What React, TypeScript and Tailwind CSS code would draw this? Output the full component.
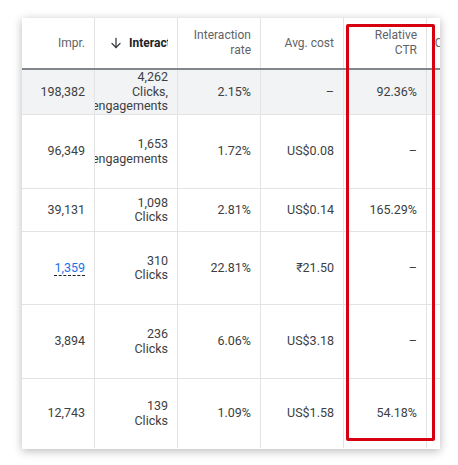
import React from "react";

const widths = ["w-[73px]", "w-[83px]", "w-[83px]", "w-[83px]", "w-[83px]", "w-[83px]"];

type Cell = React.ReactNode;

const rows: { h: string; bg?: string; cells: Cell[] }[] = [
  {
    h: "h-[45px]",
    bg: "bg-[#f1f3f4]",
    cells: ["198,382", ["4,262", "Clicks,", "engagements"], "2.15%", "–", "92.36%", ""],
  },
  {
    h: "h-[74px]",
    cells: ["96,349", ["1,653", "engagements"], "1.72%", "US$0.08", "–", ""],
  },
  {
    h: "h-[43px]",
    cells: ["39,131", ["1,098", "Clicks"], "2.81%", "US$0.14", "165.29%", ""],
  },
  {
    h: "h-[73px]",
    cells: [
      <span className="text-[#1a73e8] border-b border-dashed border-[#202124] leading-[14px]">1,359</span>,
      ["310", "Clicks"],
      "22.81%",
      "₹21.50",
      "–",
      "",
    ],
  },
  {
    h: "h-[74px]",
    cells: ["3,894", ["236", "Clicks"], "6.06%", "US$3.18", "–", ""],
  },
  {
    h: "h-[69px]",
    cells: ["12,743", ["139", "Clicks"], "1.09%", "US$1.58", "54.18%", ""],
  },
];

function ArrowDownIcon() {
  return (
    <svg width="12" height="12" viewBox="0 0 12 12" fill="none" stroke="#3c4043" strokeWidth="1.3" strokeLinecap="round" strokeLinejoin="round" className="shrink-0">
      <path d="M6 1.5v9" />
      <path d="M2 6.5l4 4 4-4" />
    </svg>
  );
}

export default function App() {
  return (
    <div
      className="relative w-[458px] h-[465px] bg-white pt-[18px] pl-[22px]"
      style={{ fontFamily: "Roboto, 'Liberation Sans', sans-serif" }}
    >
      <div className="w-[418px] h-[431px] overflow-hidden bg-white shadow-[0_2px_9px_rgba(0,0,0,0.28)] text-[12px] text-[#3c4043]">
        <div className="flex h-[52px] border-b-2 border-[#80868b] text-[#5f6368]">
          <div className="w-[73px] shrink-0 h-full border-r border-[#e3e3e3] pr-[9px] flex items-center justify-end">
            <span>Impr.</span>
          </div>
          <div className="w-[83px] shrink-0 h-full border-r border-[#e3e3e3] pl-[15px] pr-[9px] flex items-center">
            <div className="flex items-center gap-[7px] whitespace-nowrap overflow-hidden min-w-0">
              <ArrowDownIcon />
              <span className="font-bold text-[#202124]">Interactions</span>
            </div>
          </div>
          <div className="w-[83px] shrink-0 h-full border-r border-[#e3e3e3] pr-[9px] flex flex-col items-end justify-center leading-[15px]">
            <span>Interaction</span>
            <span>rate</span>
          </div>
          <div className="w-[83px] shrink-0 h-full border-r border-[#e3e3e3] pr-[9px] flex items-center justify-end">
            <span>Avg. cost</span>
          </div>
          <div className="w-[83px] shrink-0 h-full border-r border-[#e3e3e3] pr-[9px] flex flex-col items-end justify-center leading-[15px]">
            <span>Relative</span>
            <span>CTR</span>
          </div>
          <div className="w-[83px] shrink-0 h-full pr-[9px] flex items-center justify-end">
            <span className="whitespace-nowrap">Conversions</span>
          </div>
        </div>
        {rows.map((r, ri) => (
          <div key={ri} className={`flex ${r.h} ${ri < rows.length - 1 ? "border-b border-[#e3e3e3]" : ""} ${r.bg ?? ""}`}>
            {r.cells.map((c, i) => (
              <div
                key={i}
                className={`${widths[i]} shrink-0 h-full ${i < 5 ? "border-r border-[#e3e3e3]" : ""} overflow-hidden pr-[9px] flex flex-col items-end justify-center text-[12.5px] leading-[14.5px] whitespace-nowrap`}
              >
                {Array.isArray(c) ? c.map((l, li) => <span key={li}>{l}</span>) : c}
              </div>
            ))}
          </div>
        ))}
      </div>
      <div className="absolute left-[346px] top-[24px] w-[89px] h-[417px] border-[3px] border-[#d7000f] rounded-[2px]" />
    </div>
  );
}
